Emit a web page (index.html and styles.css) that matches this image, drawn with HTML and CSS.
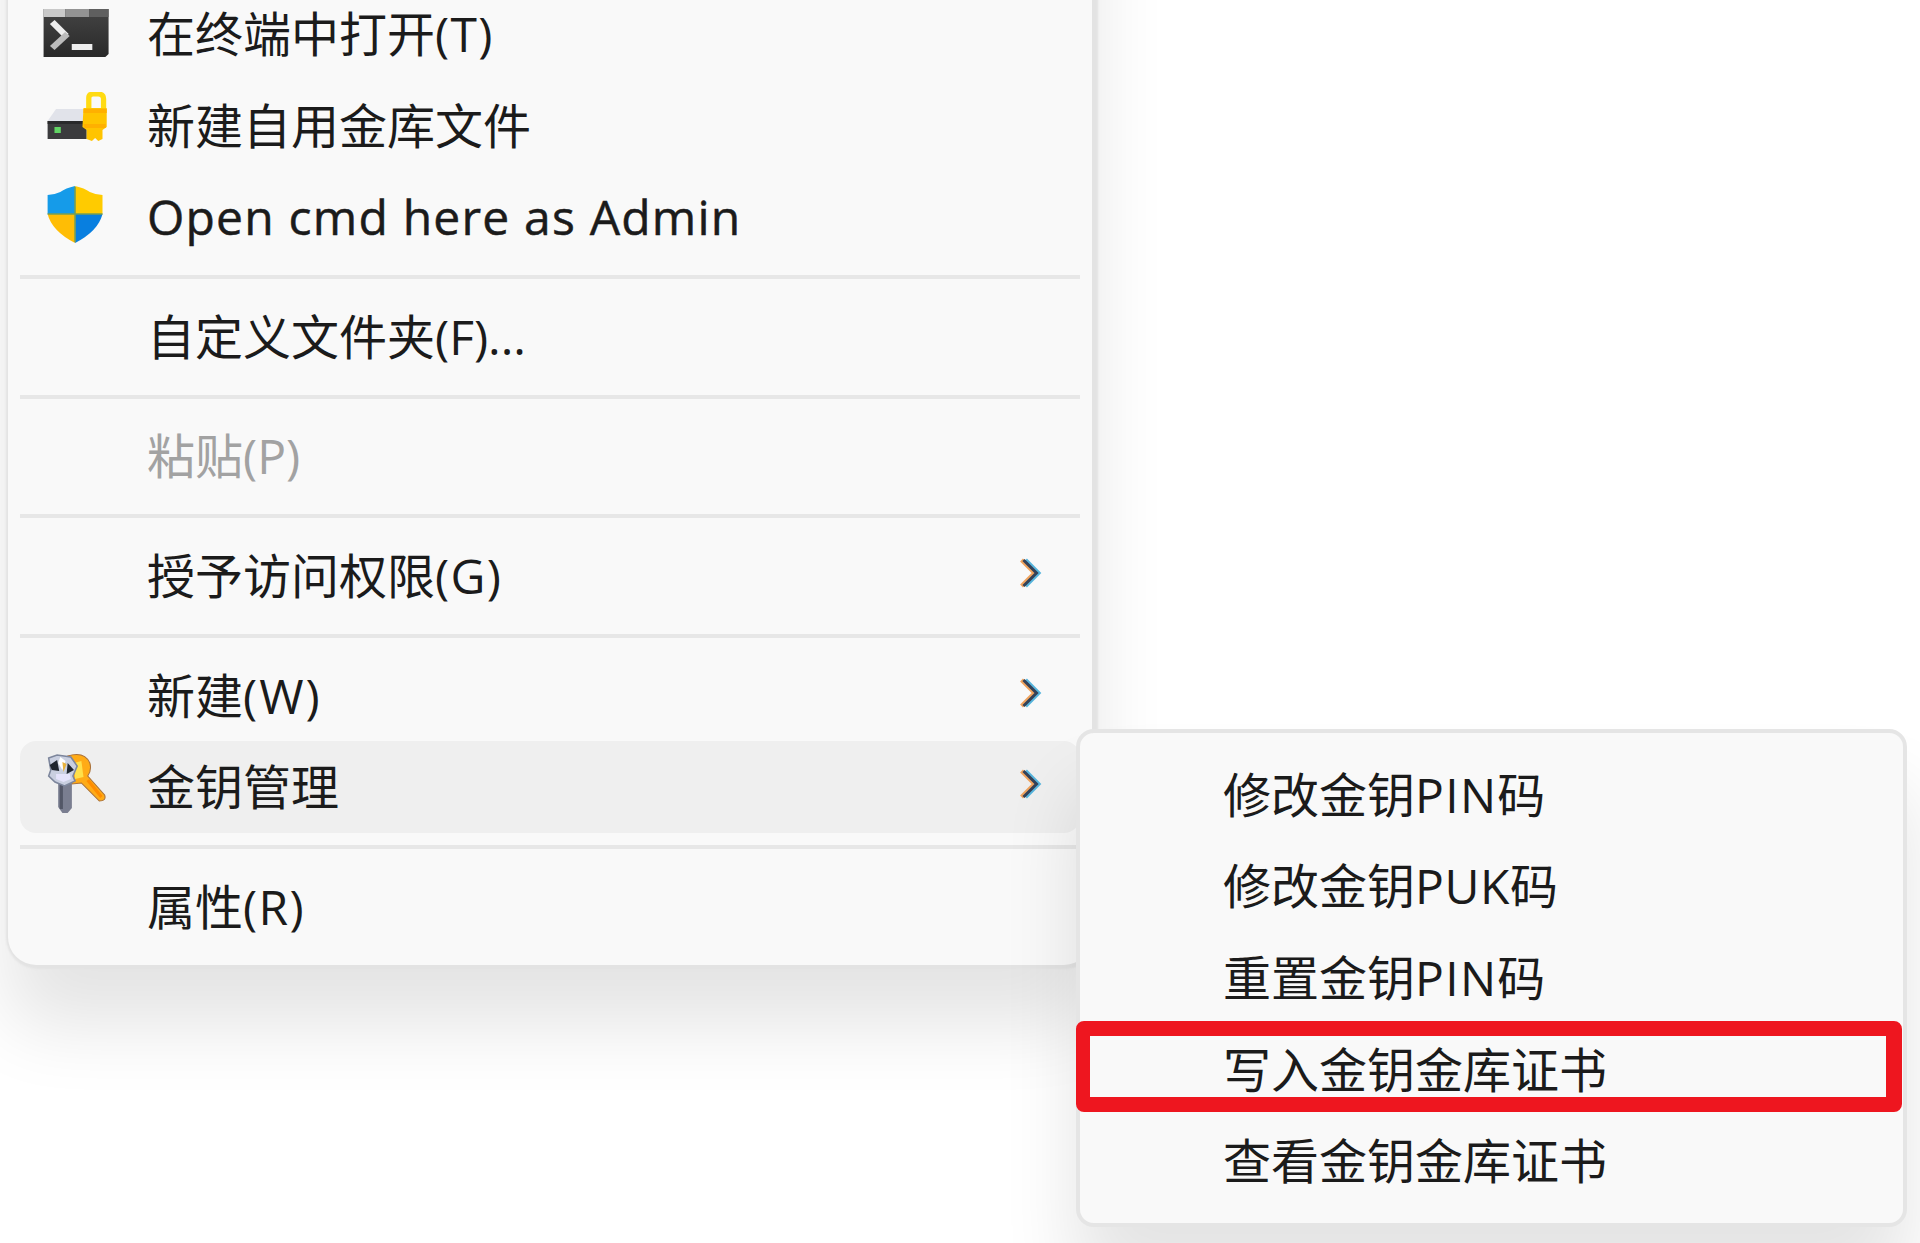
FILE: index.html
```html
<!DOCTYPE html>
<html lang="zh-CN">
<head>
<meta charset="utf-8">
<title>金钥管理</title>
<link rel="stylesheet" href="styles.css">
</head>
<body>
<main class="desktop">
  <ul class="menu">
    <li class="item">
      <svg class="icon terminal" viewBox="0 0 72 72" preserveAspectRatio="none">
        <defs><linearGradient id="tg" x2="0" y2="1"><stop offset="0" stop-color="#444"/><stop offset="1" stop-color="#292929"/></linearGradient></defs>
        <path d="M7 14H67V59L64 62H7Z" fill="url(#tg)"/>
        <path d="M7 14H27V22H7Z" fill="#c9c9c9"/><path d="M27 14H49V22H27Z" fill="#939393"/><path d="M49 14H67V22H49Z" fill="#5f5f5f"/>
        <path d="M15 27L28 41" stroke="#eee" stroke-width="6" fill="none"/><path d="M29 39L15 53" stroke="#bbb" stroke-width="6" fill="none"/>
        <path d="M33 52H52" stroke="#eee" stroke-width="6"/>
      </svg>
      <span class="label">在终端中打开<span class="key">(T)</span></span>
    </li>
    <li class="item">
      <svg class="icon drive" viewBox="0 0 72 72" preserveAspectRatio="none">
        <path d="M19 17H45V29H11Z" fill="#e1e3ea"/>
        <path d="M11 29H48V47H11Z" fill="#3b3b3d"/><path d="M11 29H48V32H11Z" fill="#29292b"/>
        <rect x="17.500" y="35" width="6" height="6" fill="#62d565"/>
        <path d="M50 17V6Q50 2 54 2H59Q64 2 64 7V17" fill="none" stroke="#ffdb13" stroke-width="5"/>
        <path d="M45 16H67V35L63 38V47L59 49L56 46L53 49L48 47V38L44 35Z" fill="#ffc400"/>
        <path d="M45 17H67V21H45ZM45 32H66V36H46Z" fill="#ffb000"/>
      </svg>
      <span class="label">新建自用金库文件</span>
    </li>
    <li class="item">
      <svg class="icon shield" viewBox="0 0 72 72" preserveAspectRatio="none">
        <path d="M37 4Q28 6 23 10Q17 13 11 13V32H37Z" fill="#159be9"/>
        <path d="M37 4Q46 6 51 10Q57 13 63 13V32H37Z" fill="#ffcb00"/>
        <path d="M11 32H37V61Q15 49 11 32Z" fill="#ffbd05"/>
        <path d="M63 32H37V61Q59 49 63 32Z" fill="#087fe0"/>
        <path d="M37 5V60M11 32H63" stroke="#769e55" stroke-width="1.500"/>
      </svg>
      <span class="label latin">Open cmd here as Admin</span>
    </li>
    <li class="separator"></li>
    <li class="item"><span class="label">自定义文件夹(F)...</span></li>
    <li class="separator"></li>
    <li class="item disabled"><span class="label">粘贴(P)</span></li>
    <li class="separator"></li>
    <li class="item"><span class="label">授予访问权限<span class="key">(G)</span></span><svg class="chevron" viewBox="0 0 22 32"><path class="fringe-warm" d="M1.500 3L14.500 16L1.500 29"/><path class="fringe-cool" d="M5.500 3L18.500 16L5.500 29"/><path class="stroke" d="M3.500 3L16.500 16L3.500 29"/></svg></li>
    <li class="separator"></li>
    <li class="item"><span class="label">新建<span class="key wide">(W)</span></span><svg class="chevron" viewBox="0 0 22 32"><path class="fringe-warm" d="M1.500 3L14.500 16L1.500 29"/><path class="fringe-cool" d="M5.500 3L18.500 16L5.500 29"/><path class="stroke" d="M3.500 3L16.500 16L3.500 29"/></svg></li>
    <li class="item active">
      <svg class="icon keys" viewBox="0 0 72 72" preserveAspectRatio="none">
        <path d="M30 7Q46 2 51 14Q53 21 49 27L65 46Q67 52 60 52L43 34L34 35Z" fill="#ffab16" stroke="#a9713a" stroke-width="1"/>
        <path d="M36 14L43 12L45 28L37 30Z" fill="#ffe04a"/>
        <path d="M49 31L62 48" stroke="#ff8c00" stroke-width="3"/>
        <path d="M21 29H34V59L30 64H25L21 58Z" fill="#7a7e90"/><path d="M24 32V60" stroke="#535767" stroke-width="3"/>
        <path d="M12 9L20 6L33 8L39 17L35 27L37 32L27 37L18 33L12 27L14 21Z" fill="#c9cfe0" stroke="#7d869c" stroke-width="1.500"/>
        <path d="M13 16L20 11L22 22L15 21ZM30 14L36 21L29 25Z" fill="#20262f"/>
        <path d="M23 8L28 12L25 21L21 14Z" fill="#fff"/><path d="M25 13L29 15L26 23Z" fill="#e8b23c"/>
        <path d="M19 25L32 25L33 30L26 33L19 30Z" fill="#e4e3fb"/>
      </svg>
      <span class="label">金钥管理</span><svg class="chevron" viewBox="0 0 22 32"><path class="fringe-warm" d="M1.500 3L14.500 16L1.500 29"/><path class="fringe-cool" d="M5.500 3L18.500 16L5.500 29"/><path class="stroke" d="M3.500 3L16.500 16L3.500 29"/></svg>
    </li>
    <li class="separator"></li>
    <li class="item"><span class="label">属性<span class="key">(R)</span></span></li>
  </ul>
  <ul class="submenu">
    <li class="item">修改金钥<span class="key">PIN</span>码</li>
    <li class="item">修改金钥<span class="key tight">PUK</span>码</li>
    <li class="item">重置金钥<span class="key">PIN</span>码</li>
    <li class="item marked">写入金钥金库证书</li>
    <li class="item">查看金钥金库证书</li>
  </ul>
</main>
</body>
</html>
```

FILE: styles.css
```css
* { box-sizing: border-box; }
body {
  margin: 0;
  overflow: hidden;
  background: #fff;
  color: #1b1b1b;
  font: 48px/1 "Open Sans", "Noto Sans CJK SC", sans-serif;
}
.desktop {
  position: relative;
  width: 1920px;
  height: 1243px;
  overflow: hidden;
}
.menu, .submenu { margin: 0; list-style: none; background: #f9f9f9; }
.menu {
  display: flex;
  flex-direction: column;
  justify-content: flex-end;
  width: 1084px;
  height: 1265px;
  margin: -300.5px 0 0 8px;
  padding: 0 12px 12px;
  border-radius: 0 0 28px 28px;
  box-shadow: 2px 0 2px 4px #e3e3e3, 0 60px 76px rgba(0, 0, 0, .11);
}
.item { display: flex; align-items: center; height: 91.6px; flex: none; white-space: nowrap; }
.menu .item { padding: 0 38px 0 127px; border-radius: 16px; }
.icon { width: 76px; height: 72px; margin: 0 35px 0 -111px; flex: none; }
.terminal { margin-top: -5px; width: 78px; margin-right: 33px; }
.drive { margin-top: 4px; }
.shield { margin-top: 1px; }
.keys { margin-top: -5px; }
.label { flex: 1; }
.latin { letter-spacing: 1.2px; -webkit-text-stroke: .5px currentColor; }
.key { letter-spacing: 1.3px; }
.wide { letter-spacing: 2px; }
.tight { letter-spacing: .6px; }
.separator { flex: none; height: 28px; padding: 12px 0; }
.separator::after { content: ""; display: block; height: 4px; background: #e7e7e7; }
.disabled { color: #a2a2a2; }
.menu .active { background: #efefef; }
.chevron { width: 22px; height: 32px; flex: none; margin-top: -6px; fill: none; stroke-width: 4; }
.fringe-warm { stroke: #f0a35e; }
.fringe-cool { stroke: #57b5dd; }
.stroke { stroke: #354258; stroke-width: 3px; }
.submenu {
  position: absolute;
  left: 1076px;
  top: 729px;
  width: 831px;
  height: 498px;
  padding: 16px 0 0;
  border: 4px solid #e5e5e5;
  border-radius: 18px;
  background-clip: padding-box;
  box-shadow: 0 60px 76px rgba(0, 0, 0, .11);
}
.submenu .item { padding-left: 143px; }
.submenu .marked {
  width: 826px;
  margin: -3px 0 3px -4px;
  padding: 6px 0 0 133px;
  border: solid #ee161f;
  border-width: 15px 16px 15px 14px;
  border-radius: 8px;
}
```
